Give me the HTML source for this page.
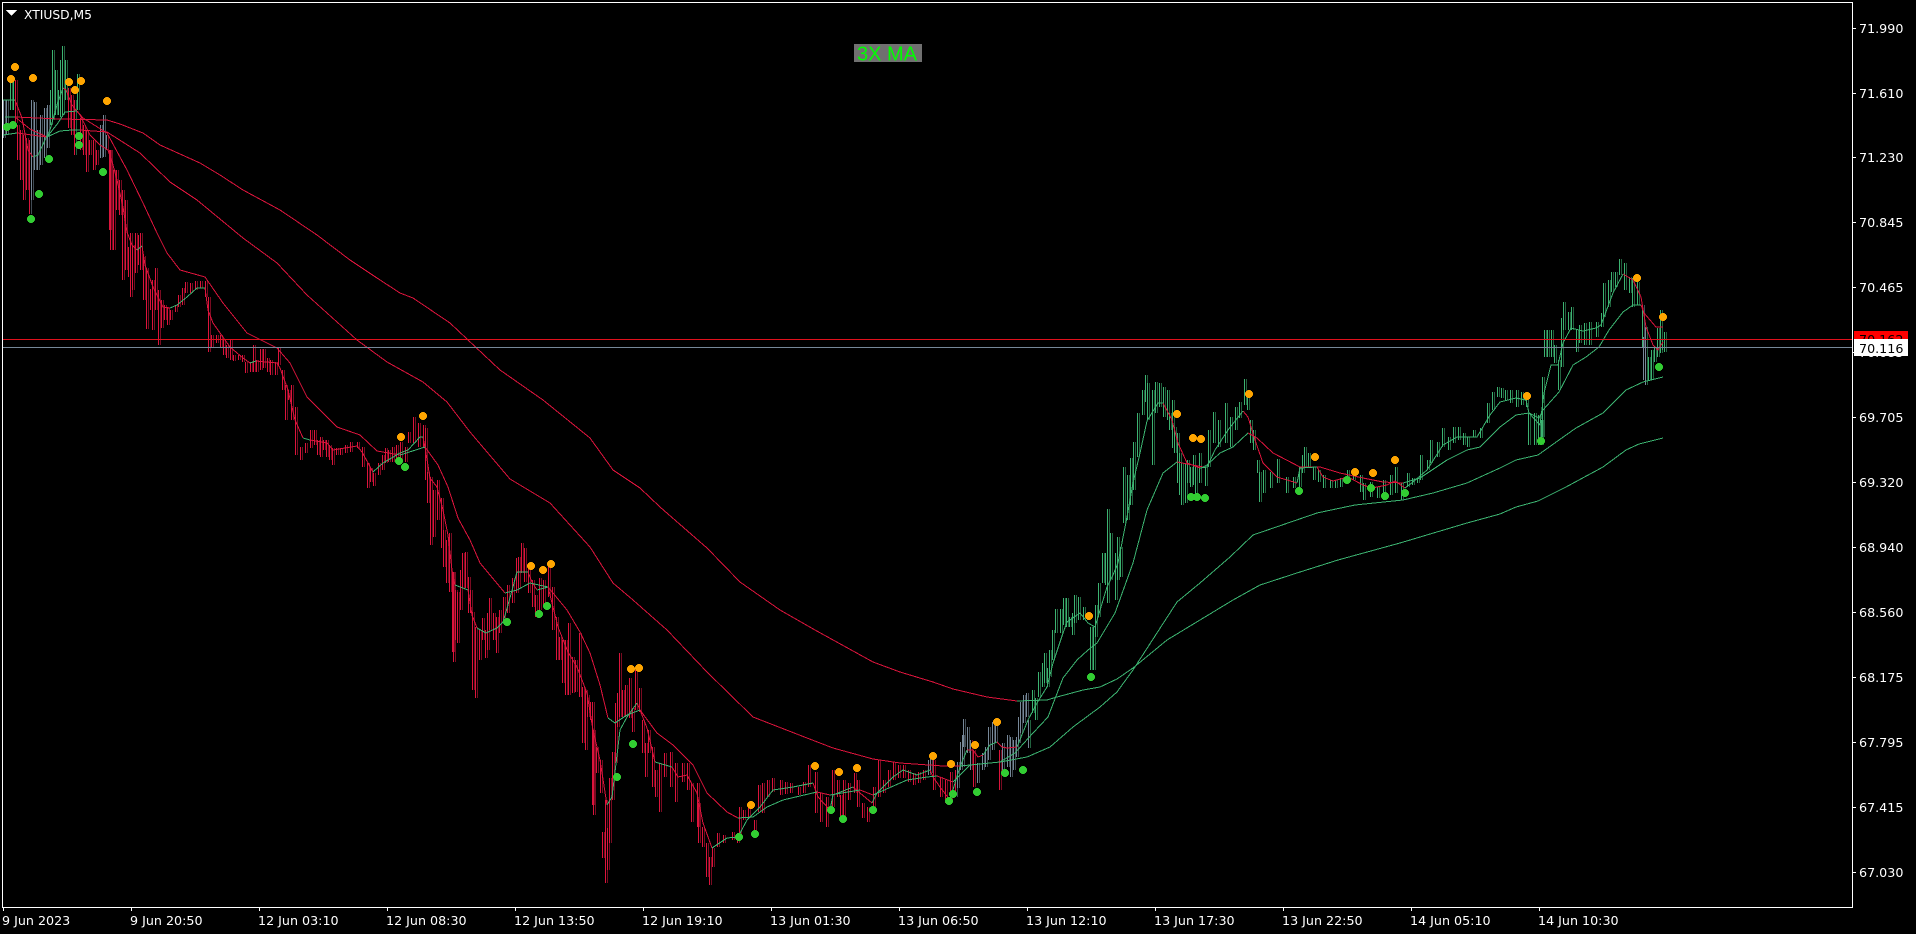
<!DOCTYPE html>
<html>
<head>
<meta charset="utf-8">
<title>XTIUSD,M5</title>
<style>
html,body{margin:0;padding:0;background:#000;width:1916px;height:934px;overflow:hidden}
svg{display:block}
text{font-family:"DejaVu Sans","Liberation Sans",sans-serif;font-size:12.7px;fill:#fff}
</style>
</head>
<body>
<svg width="1916" height="934" viewBox="0 0 1916 934" xmlns="http://www.w3.org/2000/svg" shape-rendering="crispEdges">
<defs>
<path id="b" fill="none" d="M3 100V138M6 100V135M10 80V110M13 80V110M15 80V123M17 125V160M20 130V180M23 135V200M26 138V190M29 140V214M31 100V200M34 102V170M37 130V170M40 115V165M44 108V158M47 105V148M50 90V125M52 50V120M55 70V115M58 90V115M60 60V117M62 46V115M65 60V100M68 88V128M71 95V135M74 100V155M77 74V110M80 118V150M83 125V155M86 130V172M89 140V155M93 140V170M96 150V165M100 125V158M103 115V157M106 135V150M109 150V230M110 150V250M113 170V250M116 170V210M119 180V215M122 190V280M125 200V270M128 247V277M130 233V297M132 245V290M135 233V273M138 235V265M140 233V270M143 256V300M146 268V329M150 289V310M152 280V330M155 268V310M158 290V345M161 300V328M164 305V320M167 308V325M170 310V320M175 305V312M178 295V307M182 288V305M185 282V293M190 283V293M195 281V290M200 281V288M205 281V297M208 297V352M211 335V347M216 335V343M220 335V348M223 340V355M226 345V358M230 340V360M233 355V361M238 355V360M242 355V362M245 362V373M250 362V372M253 345V372M256 360V372M260 349V370M263 349V368M267 358V372M270 360V375M275 362V375M278 348V365M282 370V390M285 385V420M288 390V400M291 385V420M295 407V455M300 447V460M305 443V453M310 430V448M314 430V445M317 440V455M320 437V457M323 440V450M326 440V457M329 445V460M332 448V465M336 448V455M340 448V455M345 445V453M350 442V452M357 442V448M362 447V467M367 463V488M370 468V482M373 473V486M378 463V475M382 455V470M385 448V463M388 450V462M392 447V462M396 445V460M400 442V460M405 447V462M408 432V443M413 417V443M418 423V447M423 425V447M425 428V480M427 472V503M430 477V545M433 490V537M437 480V520M441 498V548M443 530V567M446 540V583M449 533V592M452 572V652M453 572V662M455 590V640M457 592V643M460 570V610M462 553V588M465 552V588M468 577V613M470 590V613M472 612V690M475 627V698M479 630V660M482 618V640M485 630V658M487 613V650M489 598V630M493 613V640M496 617V653M499 610V633M503 597V620M507 585V613M512 578V603M516 558V593M518 557V588M521 543V573M524 548V582M528 565V593M532 580V607M535 595V617M539 578V610M543 580V607M548 567V597M552 587V630M556 617V660M559 637V660M562 640V683M565 640V695M568 623V695M572 657V693M575 660V692M579 633V697M582 687V743M585 690V750M587 695V717M590 702V720M592 702V805M593 730V815M596 747V773M600 760V793M602 832V858M605 800V883M607 828V870M609 778V843M612 752V800M615 703V763M617 693V727M619 653V717M622 690V717M625 685V717M629 678V718M632 708V732M635 670V710M639 688V712M642 720V753M645 743V777M648 730V753M652 747V787M655 770V797M659 763V812M664 753V777M670 752V787M675 763V802M682 763V782M687 763V790M691 783V822M697 783V827M698 803V843M702 827V847M706 843V877M709 857V885M712 848V867M717 833V847M723 835V843M732 832V840M737 833V843M739 807V840M743 810V820M748 805V818M754 820V833M758 785V812M762 783V813M767 780V797M772 778V792M780 780V795M785 782V794M790 783V793M798 787V795M803 782V793M808 765V787M815 772V813M820 793V822M826 797V827M832 770V807M837 780V797M840 795V822M843 780V822M848 783V800M854 773V793M857 780V807M862 803V818M867 807V822M873 787V807M878 760V797M883 780V793M888 770V787M893 762V780M898 765V778M903 765V778M908 770V782M913 773V785M918 772V783M923 770V780M928 760V775M930 755V773M933 760V790M940 777V797M945 780V803M950 772V800M955 770V797M957 762V788M960 742V770M962 735V767M963 719V747M967 727V753M970 740V770M973 750V787M977 763V783M982 753V770M985 747V767M988 727V760M992 722V750M995 720V743M999 750V790M1002 743V770M1007 735V767M1010 737V777M1013 740V770M1016 737V757M1018 717V743M1020 702V733M1023 695V723M1026 693V717M1028 720V748M1032 690V713M1035 698V720M1038 672V697M1042 663V687M1044 653V683M1047 668V687M1049 650V677M1052 630V660M1055 609V633M1060 609V633M1063 598V625M1066 598V627M1069 617V627M1072 613V635M1074 595V623M1078 597V620M1083 607V620M1087 613V620M1090 627V670M1093 627V670M1095 605V637M1098 583V617M1102 553V583M1105 553V585M1107 509V603M1110 533V580M1115 553V600M1117 537V580M1120 547V577M1123 467V523M1127 475V520M1130 458V505M1133 442V490M1137 413V457M1142 390V415M1145 375V402M1147 383V420M1152 390V465M1155 382V413M1159 383V407M1163 387V417M1167 390V420M1169 413V430M1172 400V448M1174 427V453M1177 433V483M1179 453V495M1181 463V505M1185 463V503M1187 460V483M1190 467V487M1193 455V485M1195 467V497M1199 453V483M1205 467V486M1208 430V467M1213 412V443M1218 420V447M1225 403V443M1230 417V447M1235 407V430M1239 402V418M1244 379V405M1247 393V410M1250 420V443M1253 430V450M1257 460V473M1259 472V502M1263 470V493M1270 472V488M1277 459V483M1286 477V493M1293 477V488M1299 467V487M1302 455V473M1304 447V467M1308 453V467M1313 467V480M1318 470V482M1323 475V488M1330 480V488M1335 480V488M1340 478V487M1347 470V482M1353 473V480M1360 475V492M1363 483V500M1370 482V497M1377 487V498M1383 480V500M1390 475V495M1395 467V493M1401 483V500M1407 473V487M1412 478V485M1417 478V483M1420 455V480M1427 460V470M1430 440V463M1437 442V457M1442 428V447M1448 437V450M1453 427V443M1458 427V440M1463 433V445M1467 437V447M1473 430V437M1480 428V438M1487 403V423M1492 392V410M1497 387V397M1501 388V398M1505 390V400M1510 390V403M1516 390V407M1521 392V405M1526 395V407M1528 413V445M1534 413V445M1538 415V445M1541 420V445M1542 377V437M1544 330V357M1547 330V357M1551 330V357M1554 345V363M1558 360V390M1561 318V367M1563 302V330M1568 312V330M1571 307V330M1576 330V352M1579 325V343M1584 323V345M1589 322V345M1596 322V337M1601 313V327M1603 283V317M1608 280V307M1611 272V292M1615 272V287M1619 259V275M1624 263V290M1629 277V293M1632 278V307M1637 282V305M1642 305V347M1643 337V380M1645 327V385M1648 357V380M1651 350V380M1654 347V362M1657 328V357M1660 310V353M1662 340V350M1664 332V352"/>
<clipPath id="cg"><rect x="0" y="0" width="9" height="934"/><rect x="31" y="0" width="19" height="934"/><rect x="100" y="0" width="8" height="934"/><rect x="927" y="0" width="6" height="934"/><rect x="957" y="0" width="15" height="934"/><rect x="977" y="0" width="21" height="934"/><rect x="1002" y="0" width="28" height="934"/><rect x="1643" y="0" width="3" height="934"/></clipPath>
<clipPath id="cv"><rect x="9" y="0" width="6" height="934"/><rect x="50" y="0" width="18" height="934"/><rect x="76" y="0" width="4" height="934"/><rect x="1030" y="0" width="613" height="934"/><rect x="1646" y="0" width="30" height="934"/></clipPath>
<clipPath id="cr"><rect x="15" y="0" width="16" height="934"/><rect x="68" y="0" width="8" height="934"/><rect x="80" y="0" width="20" height="934"/><rect x="108" y="0" width="819" height="934"/><rect x="933" y="0" width="24" height="934"/><rect x="972" y="0" width="5" height="934"/><rect x="998" y="0" width="4" height="934"/></clipPath>
</defs>

<rect x="0" y="0" width="1916" height="934" fill="#000"/>

<!-- price bars -->
<g clip-path="url(#cr)" stroke="#dc143c" stroke-width="1"><use href="#b" x="2.5" stroke-opacity="0.55"/><use href="#b" x="0.5"/></g>
<g clip-path="url(#cv)" stroke="#3cb371" stroke-width="1"><use href="#b" x="2.5" stroke-opacity="0.55"/><use href="#b" x="0.5"/></g>
<g clip-path="url(#cg)" stroke="#778899" stroke-width="1"><use href="#b" x="2.5" stroke-opacity="0.55"/><use href="#b" x="0.5"/></g>

<!-- moving averages -->
<g fill="none" stroke-width="1" stroke-linejoin="round">
<g stroke="#dc143c">
<polyline points="15,117 60,119 107,120 120,124 143,133 160,145 200,163 220,175 243,190 280,210 317,235 350,260 377,278 400,293 413,298 450,323 467,339 500,370 543,400 590,438 613,470 640,488 660,507 707,548 740,582 780,610 815,630 873,662 900,672 933,682 953,689 987,697 1017,701"/>
<polyline points="17,133 47,137"/>
<polyline points="80,130 107,132 140,153 170,182 197,200 243,238 277,263 307,295 357,340 387,362 423,382 447,402 470,432 510,479 550,503 590,547 613,583 633,600 667,630 707,672 753,717 807,738 833,748 873,759 900,763 943,766 960,766"/>
<polyline points="15,117 30,129 47,137"/>
<polyline points="77,111 83,118 107,133 127,170 143,203 157,233 167,253 180,270 205,277 223,303 247,333 277,348 290,363 307,397 337,427 360,435 377,451 400,455"/>
<polyline points="425,447 438,465 448,487 458,518 470,540 480,563 505,593"/>
<polyline points="548,587 567,610 580,632 590,653 600,685 608,718"/>
<polyline points="640,710 657,733 673,745 693,765 707,793 727,812 738,818"/>
<polyline points="817,792 830,795"/>
<polyline points="860,790 873,795"/>
<polyline points="937,776 953,782"/>
<polyline points="1177,462 1203,467"/>
<polyline points="1248,433 1257,438 1273,453 1300,467 1320,467 1340,473 1363,478 1383,482 1403,483"/>
<polyline points="1641,305 1644,313 1656,327 1663,327"/>
<polyline points="15,100 22,118 28,150 33,157"/>
<polyline points="63,88 66,90 72,105 80,115 90,135 100,145 108,150 113,165 117,180 123,207 127,232 132,245 137,250"/>
<polyline points="142,246 145,265 153,287 163,307 170,308"/>
<polyline points="205,288 208,310 213,323 225,340 230,347 243,358 250,363"/>
<polyline points="256,361 277,363 280,368 288,390 295,420 303,438"/>
<polyline points="310,440 327,443 333,450 357,446 362,452 373,472"/>
<polyline points="423,437 425,447 430,478 437,487 443,510 448,535 452,570 455,585"/>
<polyline points="468,590 472,615 477,628"/>
<polyline points="528,572 532,582 537,590"/>
<polyline points="548,587 553,607 558,627 568,652 577,667 587,693 593,730 600,760 607,805"/>
<polyline points="637,703 640,710 647,728 655,762"/>
<polyline points="672,767 678,777 687,775 697,793 703,823 712,848"/>
<polyline points="813,783 818,797 830,810"/>
<polyline points="853,787 860,793 872,803"/>
<polyline points="930,770 933,777 940,787 950,800"/>
<polyline points="967,750 973,750 978,757 983,755"/>
<polyline points="997,742 1002,747 1007,748 1017,747"/>
<polyline points="1163,403 1172,420 1178,443 1187,463 1200,468"/>
<polyline points="1243,411 1248,417 1255,440 1263,463 1277,477 1297,483"/>
<polyline points="1317,467 1323,477 1333,481 1348,477 1363,485 1372,488 1387,485 1395,481 1405,488"/>
<polyline points="1623,274 1633,280 1641,297 1646,327 1653,345 1658,350 1663,342"/>
</g>
<g stroke="#3cb371">
<polyline points="1017,701 1047,700 1057,697 1083,690 1100,687 1117,679 1133,668 1167,640 1200,620 1233,600 1260,585 1300,572 1338,560 1400,543 1467,523 1500,514 1516,507 1538,501 1566,487 1603,467 1626,450 1639,444 1663,438"/>
<polyline points="3,135 17,133"/>
<polyline points="47,137 60,131 72,130 80,130"/>
<polyline points="960,766 1000,762 1027,757 1050,747 1073,727 1100,707 1117,692 1133,670 1177,602 1200,583 1230,557 1253,535 1317,513 1355,505 1403,500 1433,493 1467,483 1500,468 1516,460 1538,455 1559,440 1576,428 1603,413 1626,390 1643,382 1663,377"/>
<polyline points="5,117 15,117"/>
<polyline points="47,137 58,123 65,112 77,111"/>
<polyline points="400,455 425,447"/>
<polyline points="505,593 517,590 530,583 548,587"/>
<polyline points="608,718 615,723 627,715 640,710"/>
<polyline points="738,818 753,817 767,807 783,800 817,792"/>
<polyline points="830,795 860,790"/>
<polyline points="873,795 907,780 927,777 937,776"/>
<polyline points="953,782 958,777 970,765 1000,762 1015,753 1033,733 1048,717 1063,678 1077,660 1088,650 1097,643 1115,613 1133,563 1147,510 1163,473 1177,462"/>
<polyline points="1203,467 1207,465 1220,453 1233,447 1248,433"/>
<polyline points="1403,483 1420,478 1447,460 1467,450 1480,447 1500,427 1516,415 1529,413 1539,418 1543,410 1559,392 1573,365 1586,357 1599,347 1609,330 1623,312 1633,305 1641,305"/>
<polyline points="3,100 15,100"/>
<polyline points="33,157 38,155 45,140 50,130 57,105 63,88"/>
<polyline points="137,250 142,246"/>
<polyline points="170,308 177,305 187,297 197,288 205,288"/>
<polyline points="250,363 256,361"/>
<polyline points="303,438 310,440"/>
<polyline points="373,472 383,463 400,453 408,450 420,437 423,437"/>
<polyline points="455,585 468,590"/>
<polyline points="477,628 486,633 497,628 503,622 508,605 517,572 528,572"/>
<polyline points="537,590 548,587"/>
<polyline points="607,805 612,797 620,730 627,717 637,703"/>
<polyline points="655,762 672,767"/>
<polyline points="712,848 727,838 738,837 747,820 760,807 773,790 793,787 813,783"/>
<polyline points="830,810 833,795 853,787"/>
<polyline points="872,803 877,793 893,777 903,770 917,775 930,770"/>
<polyline points="950,800 955,783 960,767 967,750"/>
<polyline points="983,755 990,745 997,742"/>
<polyline points="1017,747 1028,720 1037,703 1047,687 1053,663 1063,633 1067,622 1080,613 1088,623 1095,627 1107,587 1113,575 1118,563 1127,517 1133,483 1140,453 1147,421 1158,403 1163,403"/>
<polyline points="1200,468 1207,467 1215,450 1228,430 1243,411"/>
<polyline points="1297,483 1300,468 1317,467"/>
<polyline points="1405,488 1413,482 1427,470 1443,445 1457,437 1477,437 1490,415 1500,402 1516,398 1526,400 1529,413 1540,425 1544,393 1551,365 1558,365 1563,343 1571,328 1583,331 1596,328 1601,325 1613,293 1623,274"/>
</g>
</g>

<!-- signal dots -->
<g fill="#ffa500">
<circle cx="15" cy="67" r="4"/><circle cx="11" cy="79" r="4"/><circle cx="33" cy="78" r="4"/><circle cx="69" cy="82" r="4"/><circle cx="75" cy="90" r="4"/><circle cx="81" cy="81" r="4"/><circle cx="107" cy="101" r="4"/><circle cx="401" cy="437" r="4"/><circle cx="423" cy="416" r="4"/><circle cx="531" cy="566" r="4"/><circle cx="543" cy="570" r="4"/><circle cx="551" cy="564" r="4"/><circle cx="631" cy="669" r="4"/><circle cx="639" cy="668" r="4"/><circle cx="751" cy="805" r="4"/><circle cx="815" cy="766" r="4"/><circle cx="839" cy="772" r="4"/><circle cx="857" cy="768" r="4"/><circle cx="933" cy="756" r="4"/><circle cx="951" cy="764" r="4"/><circle cx="975" cy="745" r="4"/><circle cx="997" cy="722" r="4"/><circle cx="1089" cy="616" r="4"/><circle cx="1177" cy="414" r="4"/><circle cx="1193" cy="438" r="4"/><circle cx="1201" cy="439" r="4"/><circle cx="1249" cy="394" r="4"/><circle cx="1315" cy="457" r="4"/><circle cx="1355" cy="472" r="4"/><circle cx="1373" cy="473" r="4"/><circle cx="1395" cy="460" r="4"/><circle cx="1527" cy="396" r="4"/><circle cx="1637" cy="278" r="4"/><circle cx="1663" cy="317" r="4"/>
</g>
<g fill="#32cd32">
<circle cx="7" cy="127" r="4"/><circle cx="13" cy="125" r="4"/><circle cx="49" cy="159" r="4"/><circle cx="39" cy="194" r="4"/><circle cx="31" cy="219" r="4"/><circle cx="79" cy="136" r="4"/><circle cx="79" cy="145" r="4"/><circle cx="103" cy="172" r="4"/><circle cx="399" cy="461" r="4"/><circle cx="405" cy="467" r="4"/><circle cx="507" cy="622" r="4"/><circle cx="539" cy="614" r="4"/><circle cx="547" cy="606" r="4"/><circle cx="617" cy="777" r="4"/><circle cx="633" cy="744" r="4"/><circle cx="739" cy="837" r="4"/><circle cx="755" cy="834" r="4"/><circle cx="831" cy="810" r="4"/><circle cx="843" cy="819" r="4"/><circle cx="873" cy="810" r="4"/><circle cx="949" cy="801" r="4"/><circle cx="953" cy="794" r="4"/><circle cx="977" cy="792" r="4"/><circle cx="1005" cy="773" r="4"/><circle cx="1023" cy="770" r="4"/><circle cx="1091" cy="677" r="4"/><circle cx="1191" cy="497" r="4"/><circle cx="1197" cy="497" r="4"/><circle cx="1205" cy="498" r="4"/><circle cx="1299" cy="491" r="4"/><circle cx="1347" cy="480" r="4"/><circle cx="1371" cy="488" r="4"/><circle cx="1385" cy="496" r="4"/><circle cx="1405" cy="493" r="4"/><circle cx="1541" cy="441" r="4"/><circle cx="1659" cy="367" r="4"/>
</g>

<!-- bid / ask lines -->
<rect x="3" y="339" width="1850" height="1" fill="#e0101c"/>
<rect x="3" y="347" width="1850" height="1" fill="#778899"/>

<!-- frame -->
<rect x="2.5" y="2.5" width="1850" height="905" fill="none" stroke="#fff" stroke-width="1"/>

<!-- axis ticks -->
<path fill="none" stroke="#fff" stroke-width="1" d="M1853 28.5h3M1853 93.5h3M1853 157.5h3M1853 222.5h3M1853 287.5h3M1853 352.5h3M1853 417.5h3M1853 482.5h3M1853 547.5h3M1853 612.5h3M1853 677.5h3M1853 742.5h3M1853 807.5h3M1853 872.5h3M3.5 908v3M131.5 908v3M259.5 908v3M387.5 908v3M515.5 908v3M643.5 908v3M771.5 908v3M899.5 908v3M1027.5 908v3M1155.5 908v3M1283.5 908v3M1411.5 908v3M1539.5 908v3"/>

<!-- price axis -->
<text x="1859" y="33">71.990</text>
<text x="1859" y="98">71.610</text>
<text x="1859" y="162">71.230</text>
<text x="1859" y="227">70.845</text>
<text x="1859" y="292">70.465</text>
<text x="1859" y="357">70.085</text>
<text x="1859" y="422">69.705</text>
<text x="1859" y="487">69.320</text>
<text x="1859" y="552">68.940</text>
<text x="1859" y="617">68.560</text>
<text x="1859" y="682">68.175</text>
<text x="1859" y="747">67.795</text>
<text x="1859" y="812">67.415</text>
<text x="1859" y="877">67.030</text>

<rect x="1854" y="331" width="54" height="9" fill="#ff0000"/>
<text x="1859" y="344" style="fill:#000">70.162</text>
<rect x="1854" y="339" width="54" height="17" fill="#fff"/>
<text x="1859" y="353" style="fill:#000">70.116</text>

<!-- time axis -->
<text x="2" y="925">9 Jun 2023</text>
<text x="130" y="925">9 Jun 20:50</text>
<text x="258" y="925">12 Jun 03:10</text>
<text x="386" y="925">12 Jun 08:30</text>
<text x="514" y="925">12 Jun 13:50</text>
<text x="642" y="925">12 Jun 19:10</text>
<text x="770" y="925">13 Jun 01:30</text>
<text x="898" y="925">13 Jun 06:50</text>
<text x="1026" y="925">13 Jun 12:10</text>
<text x="1154" y="925">13 Jun 17:30</text>
<text x="1282" y="925">13 Jun 22:50</text>
<text x="1410" y="925">14 Jun 05:10</text>
<text x="1538" y="925">14 Jun 10:30</text>

<!-- header -->
<polygon points="6,10 17,10 11.5,16" fill="#fff"/>
<text x="24" y="19" style="font-size:12.3px">XTIUSD,M5</text>

<!-- 3X MA label -->
<rect x="854" y="44" width="68" height="18" fill="#707070"/>
<text x="857" y="60.5" style="font-family:'Liberation Sans',Arial,sans-serif;font-size:20px;fill:#00ff00" shape-rendering="auto">3X MA</text>
</svg>
</body>
</html>
